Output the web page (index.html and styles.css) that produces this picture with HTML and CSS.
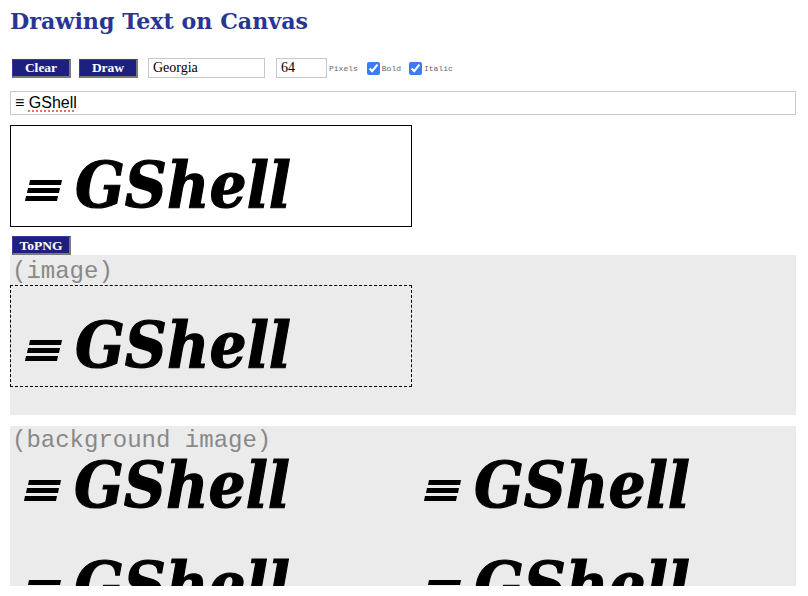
FILE: index.html
```html
<!DOCTYPE html>
<html lang="en">
<head>
<meta charset="utf-8">
<title>Drawing Text on Canvas</title>
<link rel="stylesheet" href="styles.css">
</head>
<body>
<h1 class="title">Drawing Text on Canvas</h1>

<div class="controls">
  <button class="btn clear">Clear</button>
  <button class="btn draw">Draw</button>
  <input class="field font-name" type="text" value="Georgia">
  <input class="field font-size" type="text" value="64">
  <span class="tiny pixels">Pixels</span>
  <label class="check bold"><input type="checkbox" checked><span class="tiny">Bold</span></label>
  <label class="check italic"><input type="checkbox" checked><span class="tiny">Italic</span></label>
</div>

<div class="textline">≡ <span class="misspelt">GShell</span></div>

<div class="canvas">
  <svg class="art" width="400" height="100" viewBox="0 0 400 100">
    <polygon points="19,54 51,54 50,59 18,59"/><polygon points="17,62 49,62 48,67 16,67"/><polygon points="15,70 47,70 46,75 14,75"/>
    <text x="64" y="81" textLength="216" lengthAdjust="spacingAndGlyphs">GShell</text>
  </svg>
</div>

<button class="btn topng">ToPNG</button>

<section class="panel">
  <div class="label">(image)</div>
  <div class="image">
    <svg class="art" width="400" height="100" viewBox="0 0 400 100">
      <polygon points="19,54 51,54 50,59 18,59"/><polygon points="17,62 49,62 48,67 16,67"/><polygon points="15,70 47,70 46,75 14,75"/>
      <text x="64" y="81" textLength="216" lengthAdjust="spacingAndGlyphs">GShell</text>
    </svg>
  </div>
</section>

<section class="panel bg">
  <div class="tiles">
    <svg class="art" width="400" height="100" viewBox="0 0 400 100">
      <polygon points="19,54 51,54 50,59 18,59"/><polygon points="17,62 49,62 48,67 16,67"/><polygon points="15,70 47,70 46,75 14,75"/>
      <text x="64" y="81" textLength="216" lengthAdjust="spacingAndGlyphs">GShell</text>
    </svg>
    <svg class="art" width="400" height="100" viewBox="0 0 400 100">
      <polygon points="19,54 51,54 50,59 18,59"/><polygon points="17,62 49,62 48,67 16,67"/><polygon points="15,70 47,70 46,75 14,75"/>
      <text x="64" y="81" textLength="216" lengthAdjust="spacingAndGlyphs">GShell</text>
    </svg>
    <svg class="art" width="400" height="100" viewBox="0 0 400 100">
      <polygon points="19,54 51,54 50,59 18,59"/><polygon points="17,62 49,62 48,67 16,67"/><polygon points="15,70 47,70 46,75 14,75"/>
      <text x="64" y="81" textLength="216" lengthAdjust="spacingAndGlyphs">GShell</text>
    </svg>
    <svg class="art" width="400" height="100" viewBox="0 0 400 100">
      <polygon points="19,54 51,54 50,59 18,59"/><polygon points="17,62 49,62 48,67 16,67"/><polygon points="15,70 47,70 46,75 14,75"/>
      <text x="64" y="81" textLength="216" lengthAdjust="spacingAndGlyphs">GShell</text>
    </svg>
  </div>
  <div class="label overlay">(background image)</div>
</section>
</body>
</html>
```

FILE: styles.css
```css
html, body {
  margin: 0;
  background: #fff;
}
body {
  padding: 9px 12px 0 10px;
  font-family: "Liberation Serif", serif;
  color: #000;
}

.title {
  margin: 0;
  font-family: "DejaVu Serif", serif;
  font-weight: bold;
  font-size: 22.2px;
  line-height: 25px;
  color: #283593;
}

/* toolbar */
.controls {
  display: flex;
  align-items: center;
  height: 20px;
  margin-top: 24px;
}
.btn {
  box-sizing: border-box;
  width: 59px;
  height: 19px;
  padding: 0;
  margin: 0;
  background: #1f1f7f;
  color: #fff;
  font-family: "Liberation Serif", serif;
  font-weight: bold;
  font-size: 13.5px;
  line-height: 15px;
  border-style: solid;
  border-width: 1px 2px 2px 1px;
  border-color: #3a3a95 #7a7a7a #7a7a7a #3a3a95;
  border-radius: 0;
  cursor: pointer;
}
.clear { margin-left: 2px; }
.draw { margin-left: 8px; }
.field {
  box-sizing: border-box;
  height: 20px;
  margin: 0;
  padding: 0 4px;
  border: 1px solid #c8c8c8;
  background: #fff;
  font-family: "Liberation Serif", serif;
  font-size: 14px;
  color: #000;
  outline: none;
}
.font-name { width: 117px; margin-left: 10px; }
.font-size { width: 51px; margin-left: 11px; }
.tiny {
  font-family: "Liberation Mono", monospace;
  font-size: 8px;
  color: #666;
}
.pixels { margin-left: 2px; }
.check {
  display: flex;
  align-items: center;
  gap: 2px;
}
.check input {
  width: 13px;
  height: 13px;
  margin: 0;
  accent-color: #3b7bf3;
}
.check.bold { margin-left: 9px; }
.check.italic { margin-left: 8px; }

/* text entry */
.textline {
  box-sizing: border-box;
  height: 24px;
  margin-top: 13px;
  padding: 0 4px;
  border: 1px solid #c8c8c8;
  font-family: "Liberation Sans", "DejaVu Sans", sans-serif;
  font-size: 16px;
  line-height: 22px;
  color: #000;
}
.misspelt {
  text-decoration: underline dotted #e0403a;
  text-underline-offset: 3px;
}

/* drawings */
.art {
  display: block;
}
.art polygon { fill: #000; }
.art text {
  font-family: "DejaVu Serif", serif;
  font-weight: bold;
  font-style: italic;
  font-size: 64px;
  fill: #000;
  stroke: #000;
  stroke-width: 1.2px;
}
.canvas {
  width: 400px;
  height: 100px;
  margin-top: 10px;
  border: 1px solid #000;
}
.topng {
  display: block;
  margin: 9px 0 0 2px;
}

.panel {
  position: relative;
  height: 160px;
  background: #ebebeb;
  overflow: hidden;
}
.panel.bg { margin-top: 11px; }
.label {
  padding: 3px 0 0 2px;
  font-family: "Liberation Mono", monospace;
  font-size: 24px;
  line-height: 27px;
  color: #888;
}
.image {
  width: 400px;
  height: 100px;
  border: 1px dashed #000;
}
.tiles {
  display: grid;
  grid-template-columns: 400px 400px;
  grid-auto-rows: 100px;
}
.overlay {
  position: absolute;
  top: 0;
  left: 0;
  padding-top: 1px;
}
```
